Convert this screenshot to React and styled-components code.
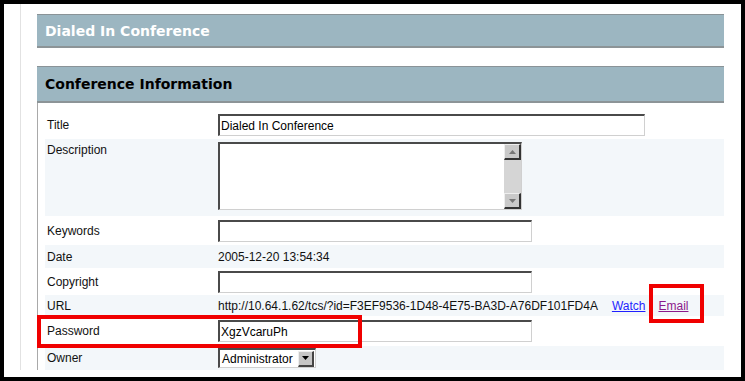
import React from "react";
import styled, { createGlobalStyle } from "styled-components";

const GlobalStyle = createGlobalStyle`
  html, body {
    margin: 0;
    padding: 0;
    background: #fff;
  }
  body {
    font-family: "Liberation Sans", Arial, sans-serif;
    font-size: 12px;
    color: #000;
  }
`;

const fields = [
  { label: "Title", h: 28, kind: "input", value: "Dialed In Conference", w: 427 },
  { label: "Description", h: 77, kind: "textarea", light: true },
  { label: "Keywords", h: 29, kind: "input", value: "", w: 314 },
  { label: "Date", h: 23, kind: "text", value: "2005-12-20 13:54:34", light: true },
  { label: "Copyright", h: 27, kind: "input", value: "", w: 314 },
  { label: "URL", h: 21, kind: "url", light: true },
  { label: "Password", h: 30, kind: "input", value: "XgzVcaruPh", w: 314 },
  { label: "Owner", h: 24, kind: "select", value: "Administrator", light: true },
];

const App = () => {
  const renderValue = (f) => {
    switch (f.kind) {
      case "input":
        return <Input readOnly defaultValue={f.value} $w={f.w} />;
      case "textarea":
        return (
          <TextBox>
            <ScrollBar>
              <ScrollBtn>
                <Arrow viewBox="0 0 7 4">
                  <path d="M0 4 L3.5 0 L7 4 Z" />
                </Arrow>
              </ScrollBtn>
              <Track />
              <ScrollBtn>
                <Arrow viewBox="0 0 7 4">
                  <path d="M0 0 L3.5 4 L7 0 Z" />
                </Arrow>
              </ScrollBtn>
            </ScrollBar>
          </TextBox>
        );
      case "url":
        return (
          <UrlLine>
            <span>http://10.64.1.62/tcs/?id=F3EF9536-1D48-4E75-BA3D-A76DF101FD4A</span>
            <Link href="#" $visited={false}>Watch</Link>
            <Link href="#" $visited>Email</Link>
          </UrlLine>
        );
      case "select":
        return (
          <Select>
            <span>{f.value}</span>
            <DropBtn>
              <DropArrow viewBox="0 0 7 4">
                <path d="M0 0 L3.5 4 L7 0 Z" />
              </DropArrow>
            </DropBtn>
          </Select>
        );
      default:
        return <Plain>{f.value}</Plain>;
    }
  };

  return (
    <>
      <GlobalStyle />
      <Frame>
        <Content>
          <Header $dark={false} $h={31}>Dialed In Conference</Header>
          <Section>
            <Header $dark $h={34}>Conference Information</Header>
            <Body>
              {fields.map((f) => (
                <Row key={f.label} $h={f.h} $light={f.light} $top={f.kind === "textarea"}>
                  <Label $top={f.kind === "textarea"}>{f.label}</Label>
                  <Cell>{renderValue(f)}</Cell>
                </Row>
              ))}
            </Body>
          </Section>
        </Content>
        <Highlight style={{ left: 645, top: 280, width: 55, height: 39 }} />
        <Highlight style={{ left: 33, top: 311, width: 325, height: 33 }} />
      </Frame>
    </>
  );
};

const Frame = styled.div`
  position: relative;
  width: 745px;
  height: 381px;
  box-sizing: border-box;
  border: 4px solid #000;
  background: #fff;
  padding-left: 16px;
`;

const Content = styled.div`
  height: 366px;
  width: 704px;
  box-sizing: border-box;
  border-left: 1px solid #e2e2e2;
  padding: 10px 0 0 16px;
`;

const Header = styled.div`
  height: ${(p) => p.$h}px;
  display: flex;
  align-items: center;
  padding-left: 8px;
  background: #9cb6c1;
  border-top: 1px solid #8a9397;
  border-bottom: 2px solid #8c9497;
  font-family: "DejaVu Sans", Verdana, sans-serif;
  font-weight: bold;
  font-size: 14px;
  color: ${(p) => (p.$dark ? "#000" : "#fff")};
`;

const Section = styled.div`
  margin-top: 18px;
`;

const Body = styled.div`
  border-left: 1px solid #a9a9a9;
  padding: 8px 0 0 7px;
`;

const Row = styled.div`
  display: grid;
  grid-template-columns: 173px 1fr;
  align-items: ${(p) => (p.$top ? "start" : "center")};
  height: ${(p) => p.$h}px;
  background: ${(p) => (p.$light ? "#f3f7fa" : "#fff")};
`;

const Label = styled.div`
  padding-left: 2px;
  line-height: 14px;
  padding-top: ${(p) => (p.$top ? "4px" : "0")};
  color: #111;
`;

const Cell = styled.div`
  display: flex;
  align-items: center;
`;

const sunken = `
  box-sizing: border-box;
  border-style: solid;
  border-width: 2px 1px 1px 2px;
  border-color: #4a4a4a #d0d0d0 #d0d0d0 #4a4a4a;
  background: #fff;
`;

const Input = styled.input`
  ${sunken}
  width: ${(p) => p.$w}px;
  height: 22px;
  margin: 0;
  padding: 1px 1px 0 1px;
  font-family: "Liberation Sans", Arial, sans-serif;
  font-size: 12px;
  color: #000;
  outline: none;
`;

const TextBox = styled.div`
  ${sunken}
  margin-top: 3px;
  width: 304px;
  height: 68px;
  display: flex;
  justify-content: flex-end;
`;

const ScrollBar = styled.div`
  width: 17px;
  display: flex;
  flex-direction: column;
`;

const ScrollBtn = styled.div`
  height: 16px;
  box-sizing: border-box;
  background: #c9c9c9;
  border-style: solid;
  border-width: 1px 2px 2px 1px;
  border-color: #eee #333 #333 #eee;
  display: flex;
  align-items: center;
  justify-content: center;
`;

const Arrow = styled.svg`
  width: 7px;
  height: 4px;
  fill: #777;
`;

const Track = styled.div`
  flex: 1;
  background-color: #e4e4e4;
  background-image: radial-gradient(#c4c4c4 0.6px, transparent 0.8px);
  background-size: 2px 2px;
`;

const Plain = styled.span`
  line-height: 14px;
  color: #111;
`;

const UrlLine = styled.div`
  display: flex;
  align-items: center;
  gap: 14px;
  line-height: 14px;
  color: #111;
`;

const Link = styled.a`
  color: ${(p) => (p.$visited ? "#8b1a8b" : "#1f1fff")};
  text-decoration: underline;
  margin-left: ${(p) => (p.$visited ? "-1px" : "0")};
`;

const Select = styled.div`
  ${sunken}
  width: 98px;
  height: 20px;
  display: flex;
  align-items: center;
  justify-content: space-between;
  padding: 0 1px 0 2px;
  font-size: 12px;
`;

const DropBtn = styled.div`
  width: 16px;
  height: 16px;
  box-sizing: border-box;
  background: #c6c6c6;
  border-style: solid;
  border-width: 1px 2px 2px 1px;
  border-color: #eee #444 #444 #eee;
  display: flex;
  align-items: center;
  justify-content: center;
`;

const DropArrow = styled.svg`
  width: 7px;
  height: 4px;
  fill: #000;
`;

const Highlight = styled.div`
  position: absolute;
  box-sizing: border-box;
  border: 4px solid #f00000;
  pointer-events: none;
`;

export default App;
